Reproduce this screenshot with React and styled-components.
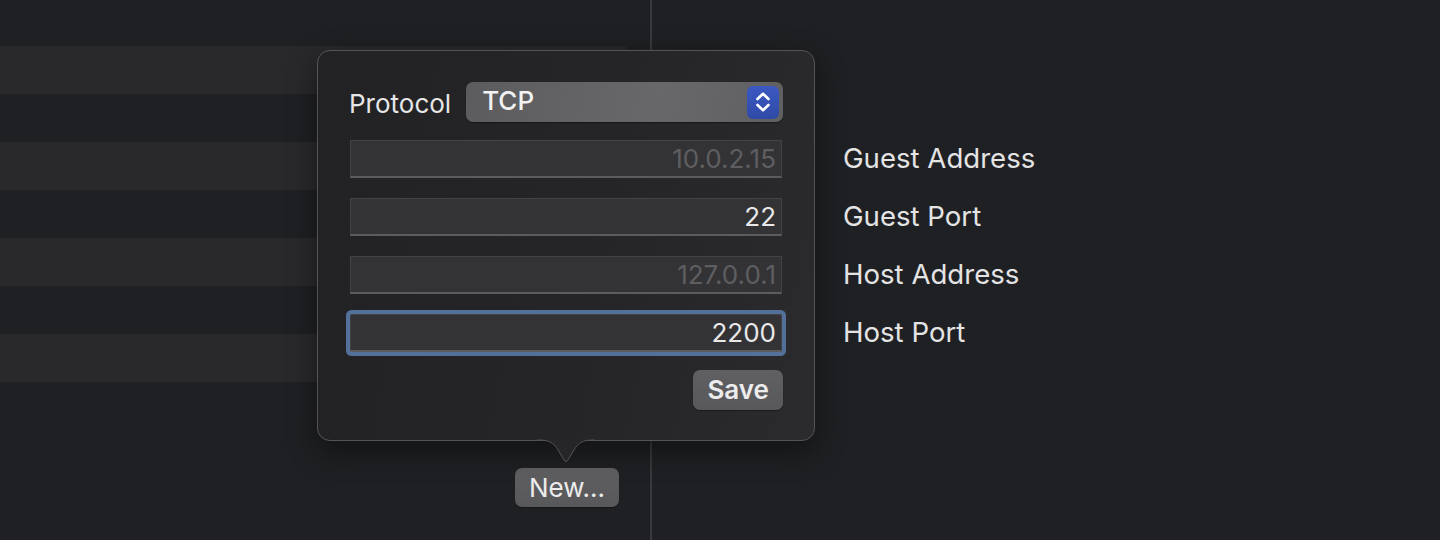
import React from 'react';
import styled, { createGlobalStyle } from 'styled-components';

const GlobalStyle = createGlobalStyle`
  html, body {
    margin: 0;
    padding: 0;
    background: #1f2023;
  }
  body {
    font-family: Inter, "Liberation Sans", sans-serif;
    -webkit-font-smoothing: antialiased;
  }
  * {
    box-sizing: border-box;
  }
`;

const Window = styled.div`
  position: relative;
  display: flex;
  width: 1440px;
  height: 540px;
  background: #1f2023;
  overflow: hidden;
`;

const LeftPane = styled.div`
  width: 650px;
  display: flex;
  flex-direction: column;
  padding-top: 46px;
`;

const Row = styled.div`
  height: 48px;
  width: 627px;
  background: ${props => (props.striped ? '#29292c' : 'transparent')};
  border-radius: 0 4px 4px 0;
`;

const Footer = styled.div`
  display: flex;
  justify-content: flex-end;
  padding-right: 31px;
  margin-top: 86px;
`;

const PushButton = styled.button`
  height: ${props => props.h || 39}px;
  padding: 0 ${props => props.px || 16}px;
  background: linear-gradient(180deg, #606063, #58585b);
  border: none;
  border-radius: 7px;
  color: #ececec;
  font-family: inherit;
  font-size: 26px;
  font-weight: ${props => (props.bold ? 600 : 400)};
  line-height: 1;
  box-shadow: 0 1px 1px rgba(0, 0, 0, 0.35);
  cursor: pointer;
`;

const RightPane = styled.div`
  flex: 1;
  border-left: 2px solid #38393c;
  padding: 129px 0 0 191px;
  display: flex;
  flex-direction: column;
`;

const SideLabel = styled.div`
  height: 58px;
  display: flex;
  align-items: center;
  font-size: 27.6px;
  color: #e4e4e5;
`;

const Popover = styled.div`
  position: absolute;
  left: 317px;
  top: 50px;
  width: 498px;
  height: 391px;
  border: 1px solid #545457;
  border-radius: 13px;
  background: linear-gradient(100deg, #222225 0%, #252528 55%, #2b2b2e 100%);
  box-shadow: 0 10px 30px rgba(0, 0, 0, 0.45);
  padding: 31px 31px 0 31px;
  display: flex;
  flex-direction: column;
`;

const Arrow = styled.svg`
  position: absolute;
  left: 219px;
  top: calc(100% - 1px);
  display: block;
`;

const ProtocolRow = styled.div`
  display: flex;
  align-items: center;
  gap: 15px;
  height: 40px;
`;

const Label = styled.span`
  font-size: 26px;
  color: #e6e6e7;
  padding-top: 2px;
`;

const Select = styled.div`
  position: relative;
  flex: 1;
  height: 40px;
  border-radius: 7px;
  background: linear-gradient(100deg, #5c5c5f 0%, #68686b 60%, #606063 100%);
  box-shadow: 0 1px 1px rgba(0, 0, 0, 0.4);
  display: flex;
  align-items: center;
  padding: 0 4px 0 16px;
`;

const SelectValue = styled.span`
  flex: 1;
  font-size: 26px;
  font-weight: 500;
  color: #f2f2f2;
  margin-top: -4px;
`;

const Stepper = styled.span`
  width: 32px;
  height: 33px;
  border-radius: 6px;
  background: linear-gradient(180deg, #3b59c2, #2f4aa6);
  display: flex;
  align-items: center;
  justify-content: center;
`;

const Fields = styled.div`
  display: flex;
  flex-direction: column;
  gap: 20px;
  margin: 18px 1px 0 1px;
`;

const Field = styled.div`
  height: 38px;
  background: #333336;
  border: 1px solid #434346;
  border-bottom: 2px solid #5c5c5f;
  border-radius: ${props => (props.focused ? '2px' : '0')};
  box-shadow: ${props => (props.focused ? '0 0 0 4px #52709a' : 'none')};
  display: flex;
  align-items: center;
  justify-content: flex-end;
  padding-right: 5px;
  font-size: 26px;
  color: ${props => (props.placeholder ? '#5e5e61' : '#e8e8e9')};
`;

const Actions = styled.div`
  display: flex;
  justify-content: flex-end;
  margin-top: 18px;
`;

const fields = [
  { value: '10.0.2.15', placeholder: true, label: 'Guest Address' },
  { value: '22', label: 'Guest Port' },
  { value: '127.0.0.1', placeholder: true, label: 'Host Address' },
  { value: '2200', focused: true, label: 'Host Port' },
];

const Chevrons = () => (
  <svg width="18" height="24" viewBox="0 0 18 24" fill="none">
    <path d="M3.5 9 L9 3.8 L14.5 9" stroke="#fff" strokeWidth="2.6" strokeLinecap="round" strokeLinejoin="round" />
    <path d="M3.5 15 L9 20.2 L14.5 15" stroke="#fff" strokeWidth="2.6" strokeLinecap="round" strokeLinejoin="round" />
  </svg>
);

export default function App() {
  return (
    <>
      <GlobalStyle />
      <Window>
        <LeftPane>
          {[true, false, true, false, true, false, true].map((striped, i) => (
            <Row key={i} striped={striped} />
          ))}
          <Footer>
            <PushButton px={14}>New...</PushButton>
          </Footer>
        </LeftPane>
        <RightPane>
          {fields.map(f => (
            <SideLabel key={f.label}>{f.label}</SideLabel>
          ))}
        </RightPane>

        <Popover>
          <ProtocolRow>
            <Label>Protocol</Label>
            <Select>
              <SelectValue>TCP</SelectValue>
              <Stepper>
                <Chevrons />
              </Stepper>
            </Select>
          </ProtocolRow>
          <Fields>
            {fields.map(f => (
              <Field key={f.label} placeholder={f.placeholder} focused={f.focused}>
                {f.value}
              </Field>
            ))}
          </Fields>
          <Actions>
            <PushButton bold h={40} px={14}>Save</PushButton>
          </Actions>
          <Arrow width="58" height="27" viewBox="0 0 58 27">
            <path d="M0 -1 L0 1 C10 1 14 2 19.5 8.5 L27.5 21.5 Q29 24 30.5 21.5 L38.5 8.5 C44 2 48 1 58 1 L58 -1 Z" fill="#262629" />
            <path d="M0 1 C10 1 14 2 19.5 8.5 L27.5 21.5 Q29 24 30.5 21.5 L38.5 8.5 C44 2 48 1 58 1" fill="none" stroke="#545457" strokeWidth="1" />
          </Arrow>
        </Popover>
      </Window>
    </>
  );
}
